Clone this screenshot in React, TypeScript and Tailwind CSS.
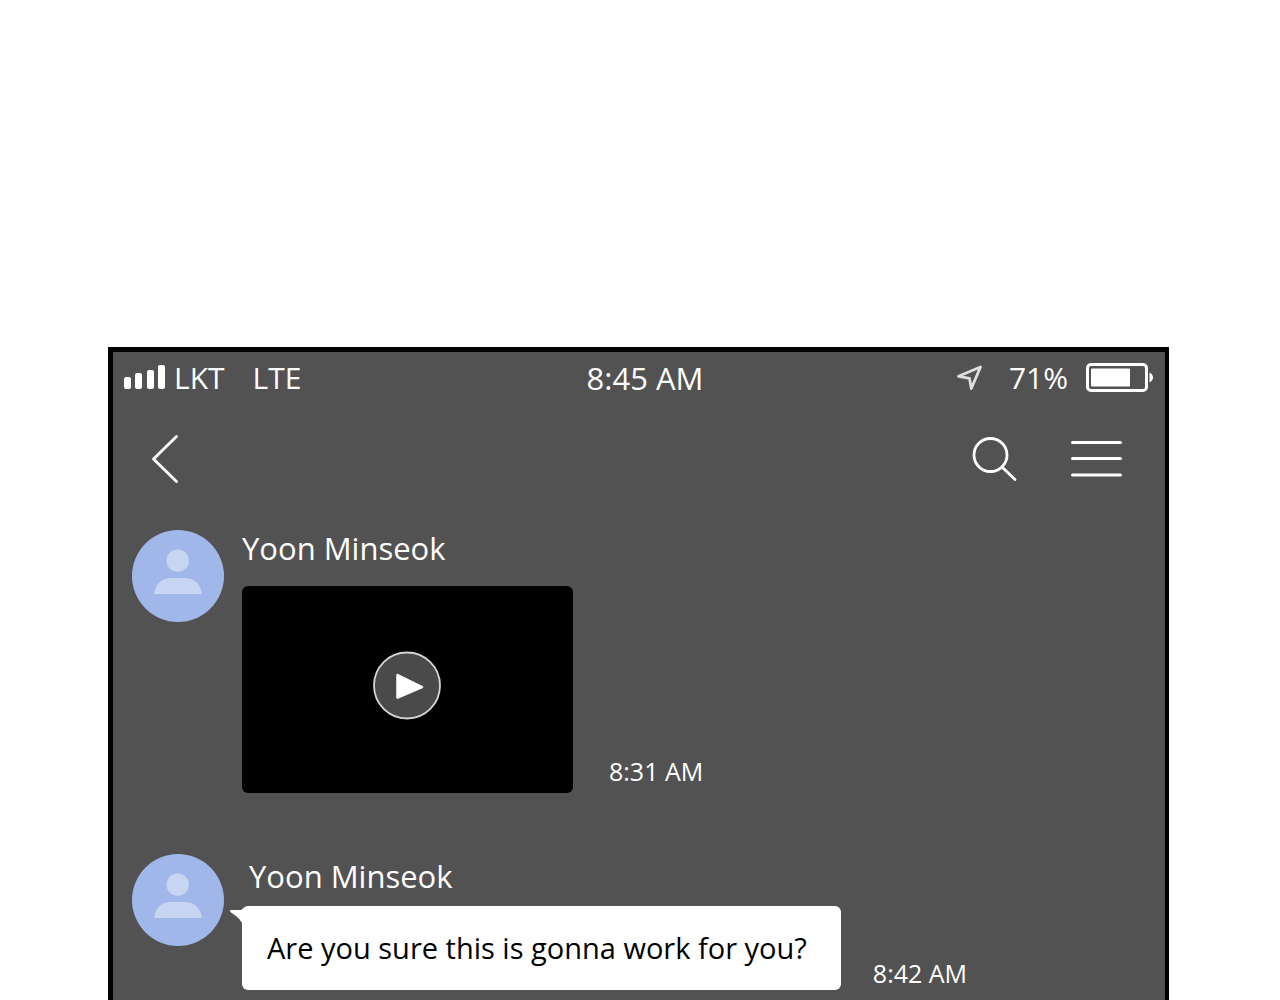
import type { ReactNode } from "react";

interface MessageProps {
  sender: string;
  time: string;
  children: ReactNode;
  bubble?: boolean;
}

function SignalIcon() {
  return (
    <svg
      className="w-[42px] h-[26px] shrink-0"
      viewBox="0 0 42 26"
      fill="#fff"
      aria-hidden="true"
    >
      <rect x="0" y="12" width="7" height="12" rx="2" />
      <rect x="11" y="8" width="7" height="16" rx="2" />
      <rect x="23" y="5" width="7" height="19" rx="2" />
      <rect x="34" y="0" width="7" height="24" rx="2" />
    </svg>
  );
}

function LocationIcon() {
  return (
    <svg
      className="w-[26px] h-[26px] shrink-0"
      viewBox="0 0 26 26"
      fill="none"
      stroke="#dedede"
      strokeWidth="2.8"
      strokeLinejoin="round"
      aria-hidden="true"
    >
      <path d="M23.5 2 1.5 11.3 12.5 13.4 14.3 23.5Z" />
    </svg>
  );
}

function BatteryIcon() {
  return (
    <svg
      className="w-[68px] h-[30px] shrink-0"
      viewBox="0 0 68 30"
      aria-hidden="true"
    >
      <rect
        x="1.5"
        y="1.5"
        width="59"
        height="26"
        rx="3.5"
        fill="none"
        stroke="#fff"
        strokeWidth="3"
      />
      <rect x="5" y="5.5" width="39" height="18" rx="1" fill="#fff" />
      <path d="M63.5 9.5Q67 11.5 67 14.5Q67 17.5 63.5 19.5Z" fill="#fff" />
    </svg>
  );
}

function Avatar() {
  return (
    <svg
      className="w-[92px] h-[92px] shrink-0"
      viewBox="0 0 92 92"
      aria-hidden="true"
    >
      <circle cx="46" cy="46" r="46" fill="#a1b6e9" />
      <circle cx="45.7" cy="30.7" r="11.2" fill="#c8d5f2" />
      <path
        d="M22 64Q23 56 29 51Q33 48 39 48H53Q59 48 63 51Q69 56 70 64Z"
        fill="#c8d5f2"
      />
    </svg>
  );
}

function StatusBar() {
  return (
    <div className="grid grid-cols-[1fr_auto_1fr] items-center h-[52px] px-[11px] text-[30px] leading-9">
      <div className="flex items-center">
        <SignalIcon />
        <span className="ml-2">LKT</span>
        <span className="ml-7">LTE</span>
      </div>
      <span className="pl-3 text-[31px]">8:45 AM</span>
      <div className="flex items-center justify-end">
        <LocationIcon />
        <span className="ml-[26px] mr-[18px]">71%</span>
        <BatteryIcon />
      </div>
    </div>
  );
}

function NavBar() {
  return (
    <nav className="flex items-center h-[110px] pl-[37px] pr-[43px]">
      <button type="button" aria-label="Back">
        <svg
          className="w-[30px] h-[50px]"
          viewBox="0 0 30 50"
          fill="none"
          stroke="#fff"
          strokeWidth="2.8"
          strokeLinecap="round"
          strokeLinejoin="round"
        >
          <path d="M26.5 2.5 3.5 25 26.5 47.5" />
        </svg>
      </button>
      <button type="button" aria-label="Search" className="ml-auto">
        <svg
          className="w-[46px] h-[46px]"
          viewBox="0 0 46 46"
          fill="none"
          stroke="#fff"
          strokeWidth="2.8"
          strokeLinecap="round"
        >
          <circle cx="18.5" cy="19" r="16.5" />
          <path d="M30.5 31.5 43 43.5" />
        </svg>
      </button>
      <button type="button" aria-label="Menu" className="ml-[52px]">
        <svg
          className="w-[52px] h-[38px]"
          viewBox="0 0 52 38"
          stroke="#fff"
          strokeWidth="3"
          strokeLinecap="round"
        >
          <path d="M2.5 2.5H50.5M2.5 18.5H50.5M2.5 35H50.5" />
        </svg>
      </button>
    </nav>
  );
}

function Message({ sender, time, children, bubble }: Readonly<MessageProps>) {
  return (
    <article className="flex gap-[18px]">
      <Avatar />
      <div className="flex flex-col">
        <h2
          className={
            bubble
              ? "pl-[7px] pt-1 pb-3 text-[31px] leading-9"
              : "pb-5 text-[31px] leading-9"
          }
        >
          {sender}
        </h2>
        <div className={bubble ? "flex items-end gap-8" : "flex items-end gap-9"}>
          {children}
          <time
            className={
              bubble
                ? "pb-px text-[25px] leading-8"
                : "pb-1.5 text-[25px] leading-8"
            }
          >
            {time}
          </time>
        </div>
      </div>
    </article>
  );
}

function VideoThumbnail() {
  return (
    <div className="flex items-start justify-center w-[331px] h-[207px] pt-16 rounded-md bg-black">
      <button type="button" aria-label="Play video">
        <svg className="w-[71px] h-[71px]" viewBox="0 0 71 71">
          <circle
            cx="35"
            cy="35.5"
            r="33"
            fill="#4a4a4a"
            stroke="#d6d6d6"
            strokeWidth="1.8"
          />
          <path
            d="M25.5 25V47.5L50 37Z"
            fill="#fff"
            stroke="#fff"
            strokeWidth="2.5"
            strokeLinejoin="round"
          />
        </svg>
      </button>
    </div>
  );
}

function TextBubble({ text }: Readonly<{ text: string }>) {
  return (
    <div className="relative pl-[25px] pr-[34px] py-6 rounded-md bg-white">
      {/* Tail */}
      <svg
        className="absolute -left-3 top-0.5 w-[14px] h-4"
        viewBox="0 0 14 16"
        fill="#fff"
        aria-hidden="true"
      >
        <path d="M14 0 11 2H1Q-1 2.5 1 4.5L6 8Q10 11 12 15H14Z" />
      </svg>
      <p className="text-[29px] leading-9 text-black">{text}</p>
    </div>
  );
}

export default function App() {
  return (
    <main className="flex flex-col min-h-screen pt-[347px] pl-[108px] pr-[111px] bg-white font-['Open_Sans',sans-serif] text-white">
      <section className="flex-1 border-t-[5px] border-l-[5px] border-r-4 border-black bg-[#525252]">
        <StatusBar />
        <NavBar />
        <div className="flex flex-col gap-[61px] pt-4 pl-[19px] pb-2.5">
          <Message sender="Yoon Minseok" time="8:31 AM">
            <VideoThumbnail />
          </Message>
          <Message sender="Yoon Minseok" time="8:42 AM" bubble>
            <TextBubble text="Are you sure this is gonna work for you?" />
          </Message>
        </div>
      </section>
    </main>
  );
}
